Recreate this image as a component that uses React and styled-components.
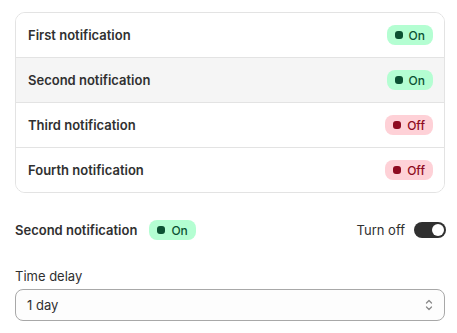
import React from 'react';
import styled, { createGlobalStyle } from 'styled-components';

const GlobalStyle = createGlobalStyle`
    body {
        margin: 0;
        background: #fff;
        font-family: Inter, "Noto Sans", sans-serif;
        color: #303030;
    }
`;

const notifications = [
    { name: 'First notification', on: true },
    { name: 'Second notification', on: true, selected: true },
    { name: 'Third notification', on: false },
    { name: 'Fourth notification', on: false },
];

function StatusBadge({ on }) {
    return (
        <Badge $on={on}>
            <Dot $on={on} />
            {on ? 'On' : 'Off'}
        </Badge>
    );
}

function App() {
    return (
        <Page>
            <GlobalStyle />
            <Card>
                {notifications.map((n) => (
                    <Row key={n.name} $selected={n.selected}>
                        <RowTitle>{n.name}</RowTitle>
                        <StatusBadge on={n.on} />
                    </Row>
                ))}
            </Card>
            <Detail>
                <DetailTitle>
                    <RowTitle>Second notification</RowTitle>
                    <StatusBadge on />
                </DetailTitle>
                <ToggleWrap>
                    Turn off
                    <Toggle>
                        <Knob />
                    </Toggle>
                </ToggleWrap>
            </Detail>
            <Field>
                <Label>Time delay</Label>
                <Select>
                    1 day
                    <svg width="10" height="14" viewBox="0 0 10 14" fill="none">
                        <path d="M2.5 5 L5 2.5 L7.5 5" stroke="#8a8a8a" strokeWidth="1.3" strokeLinecap="round" strokeLinejoin="round" />
                        <path d="M2.5 9 L5 11.5 L7.5 9" stroke="#8a8a8a" strokeWidth="1.3" strokeLinecap="round" strokeLinejoin="round" />
                    </svg>
                </Select>
            </Field>
        </Page>
    );
}

export default App;

const Page = styled.div`
    width: 430px;
    padding: 12px 0 0 15px;
    display: flex;
    flex-direction: column;
`;

const Card = styled.div`
    border: 1px solid #e3e3e3;
    border-radius: 10px;
    overflow: hidden;
`;

const Row = styled.div`
    height: 44px;
    display: flex;
    align-items: center;
    justify-content: space-between;
    padding: 0 11px 0 12px;
    background: ${(p) => (p.$selected ? '#f5f5f5' : '#fff')};
    border-top: 1px solid #e3e3e3;
    &:first-child {
        border-top: none;
    }
`;

const RowTitle = styled.span`
    font-size: 13px;
    font-weight: 600;
    color: #303030;
`;

const Badge = styled.span`
    display: inline-flex;
    align-items: center;
    gap: 6px;
    height: 20px;
    padding: 0 8px 0 8px;
    border-radius: 8px;
    font-size: 12px;
    font-weight: 500;
    background: ${(p) => (p.$on ? '#b4fed2' : '#fed1d7')};
    color: ${(p) => (p.$on ? '#0c5132' : '#8e0b21')};
`;

const Dot = styled.span`
    width: 8px;
    height: 8px;
    border-radius: 3px;
    background: ${(p) => (p.$on ? '#0c5132' : '#8e0b21')};
`;

const Detail = styled.div`
    margin-top: 27px;
    display: flex;
    align-items: center;
    justify-content: space-between;
    height: 20px;
`;

const DetailTitle = styled.div`
    display: flex;
    align-items: center;
    gap: 12px;
`;

const ToggleWrap = styled.div`
    display: flex;
    align-items: center;
    gap: 9px;
    font-size: 13px;
    color: #303030;
    margin-right: -1px;
`;

const Toggle = styled.div`
    width: 32px;
    height: 16px;
    border-radius: 8px;
    background: #303030;
    display: flex;
    align-items: center;
    justify-content: flex-end;
    padding: 0 2px;
    box-sizing: border-box;
`;

const Knob = styled.div`
    width: 12px;
    height: 12px;
    border-radius: 50%;
    background: #fff;
`;

const Field = styled.div`
    margin-top: 28px;
    display: flex;
    flex-direction: column;
    gap: 5px;
`;

const Label = styled.label`
    font-size: 13px;
    color: #303030;
`;

const Select = styled.div`
    height: 32px;
    box-sizing: border-box;
    border: 1px solid #a8a8a8;
    border-radius: 8px;
    background: #fdfdfd;
    display: flex;
    align-items: center;
    justify-content: space-between;
    padding: 0 10px 0 11px;
    font-size: 13px;
    color: #303030;
`;
